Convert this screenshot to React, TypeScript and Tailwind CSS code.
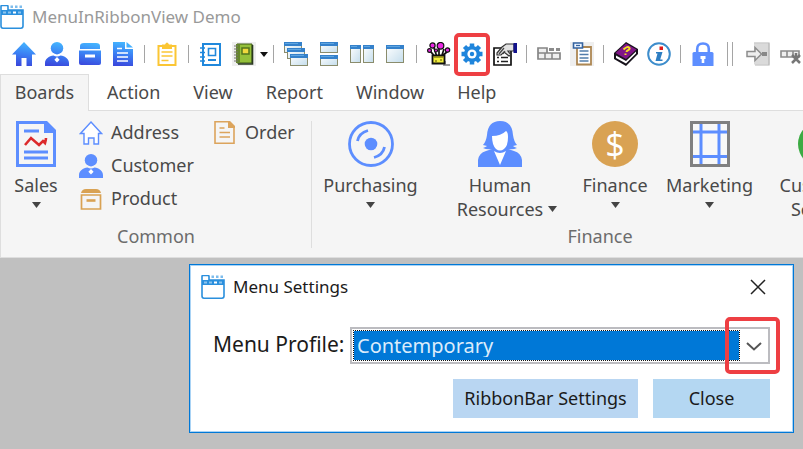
import React from "react";

type Kids = { children: React.ReactNode };

const Svg = ({ children, size = 24 }: Kids & { size?: number }) => (
  <svg width={size} height={size} viewBox="0 0 24 24" fill="none" className="shrink-0" aria-hidden="true">
    {children}
  </svg>
);

const BlueGradient = () => (
  <svg width="0" height="0" className="absolute" aria-hidden="true">
    <defs>
      <linearGradient id="blue" gradientUnits="userSpaceOnUse" x1="14" y1="0" x2="10" y2="24">
        <stop offset="0" stopColor="#45b8ff" />
        <stop offset="0.5" stopColor="#3b80f4" />
        <stop offset="1" stopColor="#3a48dc" />
      </linearGradient>
      <linearGradient id="pane" x1="0" y1="0" x2="1" y2="1">
        <stop offset="0" stopColor="#ffffff" />
        <stop offset="1" stopColor="#c4ddec" />
      </linearGradient>
    </defs>
  </svg>
);

const AppIcon = () => (
  <Svg>
    <path d="M1 5V1.500q0-1 1-1h5q1 0 1 1V5h15v16q0 2.200-2.200 2.200H3Q1 23.200 1 21z" fill="#fff" stroke="#2a8fdd" strokeWidth="1.600" />
    <path d="M1 5h22v5H1z" fill="#2a8fdd" />
    <path d="M3 6.500h3v2H3zM8 6.500h3v2H8zM18 6.500h3v2h-3z" fill="#8cc4ee" />
    <path d="M13 6.500h3v2h-3z" fill="#fff" />
    <path d="M10.500 0.500H13V3h-2.500zM15 0.500h2.500V3H15zM19.500 0.500H22V3h-2.500z" fill="#7dbcec" />
  </Svg>
);

const Home = () => (
  <Svg>
    <path d="M12 0 0 12.500h4V24h5.500v-8h5v8H20V12.500h4z" fill="url(#blue)" />
  </Svg>
);

const Person = ({ fill }: { fill: string }) => (
  <Svg>
    <circle cx="12" cy="6.200" r="6.200" fill={fill} />
    <path d="M0 24v-3C0 17 4 14 8.500 13.500q3.500 2 7 0C20 14 24 17 24 21v3z" fill={fill} />
    <path d="m12 15 2.600 2.800L12 20.500l-2.600-2.700z" fill="#fff" />
  </Svg>
);

const Drawer = () => (
  <Svg>
    <path d="M2 7V4q0-3 4-3h12q4 0 4 3v3z" fill="url(#blue)" />
    <path d="M1 8.500h22V21q0 2-2 2H3q-2 0-2-2z" fill="url(#blue)" />
    <path d="M7 12.500h10v3H7z" fill="#fff" />
  </Svg>
);

const Doc = () => (
  <Svg>
    <path d="M2 0h12v7h8v17H2z" fill="url(#blue)" />
    <path d="m15.500 0 6.500 5.500h-6.500z" fill="#45b0ff" />
    <path d="M6 6.500h5M6 11h11M6 15h11M6 19h11" stroke="#fff" strokeWidth="1.700" />
  </Svg>
);

const Clipboard = () => (
  <Svg>
    <path d="M3.500 4h17v19h-17z" fill="#fff" stroke="#fbc634" strokeWidth="2" />
    <path d="M7 2.500h3q2-4 4 0h3V7H7z" fill="#fbc634" />
    <path d="M6.500 10h11M6.500 14h11M6.500 18.500h7" stroke="#fbc634" strokeWidth="1.600" />
  </Svg>
);

const Notebook = () => (
  <Svg>
    <path d="M4 2h17v21H4z" fill="#fff" stroke="#2088dc" strokeWidth="2" />
    <path d="M1 6h5M1 10.500h5M1 15h5M1 19h5" stroke="#2088dc" strokeWidth="1.500" />
    <path d="M9.500 6.500h7v7h-7z" stroke="#2088dc" strokeWidth="1.600" />
    <path d="M9 18h8" stroke="#2088dc" strokeWidth="2" />
  </Svg>
);

const GreenBook = () => (
  <Svg>
    <path d="M0 0h24v24H0z" fill="#efefef" />
    <path d="M5 2h15v19H5z" fill="#94c03a" stroke="#3c5b14" strokeWidth="1" />
    <path d="M4 2h4v19H4z" fill="#66872b" />
    <path d="M2 4h4M2 7h4M2 10h4M2 13h4M2 16h4M2 19h4" stroke="#77776f" strokeWidth="1.200" />
    <path d="M10 6h7v6h-7z" fill="#efd83e" stroke="#53741c" strokeWidth="1.500" />
    <path d="M20.500 3v19H6" stroke="#2a3820" strokeWidth="1.600" />
  </Svg>
);

const Pane = ({ x, y, w, h }: { x: number; y: number; w: number; h: number }) => (
  <g>
    <rect x={x + 0.5} y={y + 0.5} width={w - 1} height={h - 1} fill="url(#pane)" stroke="#8a8c6c" />
    <rect x={x} y={y} width={w} height="4" fill="#3481cb" />
    <rect x={x + 1} y={y + 1} width={w - 5} height="1" fill="#5fa5e0" />
  </g>
);

const Cascade = () => (
  <Svg>
    <Pane x={0} y={0} w={18} h={11} />
    <Pane x={3} y={6} w={18} h={11} />
    <Pane x={6} y={12} w={18} h={12} />
  </Svg>
);
const TileRows = () => (
  <Svg>
    <Pane x={3} y={0} w={18} h={11} />
    <Pane x={3} y={13} w={18} h={11} />
  </Svg>
);
const TileCols = () => (
  <Svg>
    <Pane x={0} y={3} w={11} h={18} />
    <Pane x={13} y={3} w={11} h={18} />
  </Svg>
);
const OneWindow = () => (
  <Svg>
    <Pane x={3} y={3} w={18} h={18} />
  </Svg>
);

const Flowers = () => (
  <Svg>
    <path d="m8 15-4-5m6 5L7 6m5 9V6m2 9 7-6M3 9l3 3m9 1 2-6" stroke="#111" strokeWidth="1.700" />
    <path d="M16 24h7v-2h-4v-3h-2z" fill="#9b9b9b" />
    <path d="M5.500 13.500h12v8h-12z" fill="#f2ee3c" stroke="#111" strokeWidth="1.800" />
    <path d="M6.500 15h10M8 19h2m3-1h2" stroke="#8a8618" strokeWidth="1.500" />
    <g fill="#ea28e4" stroke="#111" strokeWidth="1.200">
      <circle cx="5.500" cy="3.500" r="2.600" />
      <circle cx="13.500" cy="3.800" r="3.300" />
      <circle cx="2.500" cy="8.500" r="1.900" />
      <circle cx="20.500" cy="8" r="2.200" />
      <circle cx="9" cy="8.500" r="1.500" />
    </g>
  </Svg>
);

const Gear = () => (
  <Svg>
    <g stroke="#1f85dc" strokeWidth="4.500">
      <path d="M12 1.500v21M1.500 12h21M4.500 4.500l15 15M19.500 4.500l-15 15" />
    </g>
    <circle cx="12" cy="12" r="8" fill="#1f85dc" />
    <circle cx="12" cy="12" r="4.600" fill="#fff" />
    <circle cx="12" cy="12" r="2.200" fill="#1f85dc" />
  </Svg>
);

const Properties = () => (
  <Svg>
    <path d="M1 6h17v17H1z" fill="#fff" stroke="#111" strokeWidth="1.700" />
    <path d="M4 15.500h2M8 15.500h7M4 19.500h2M8 19.500h7" stroke="#222" strokeWidth="1.400" />
    <path d="m4 11 5-6 4-3h8v7h-6l3 4-2 1-5-4-3 3H4z" fill="#e2e2e2" stroke="#333" strokeWidth="1.200" />
    <path d="m6 12 5-6m-1 6 2-3" stroke="#444" strokeWidth="1.200" />
    <path d="M20.500 1H24v10h-3.500z" fill="#12128c" />
  </Svg>
);

const RibbonGlyph = () => (
  <Svg>
    <path d="M1 6h9v5H1zM1 11h22v6H1z" fill="#efefef" stroke="#858585" strokeWidth="1.700" />
    <path d="M12 6h5v3h-5zM19 6h4v3h-4z" fill="#8b8b8b" />
    <path d="M8 11v6m7-6v6" stroke="#858585" strokeWidth="1.500" />
  </Svg>
);

const DocList = () => (
  <Svg>
    <path d="M0 0h24v24H0z" fill="#efefef" />
    <path d="M7 5h14v17.500H7z" fill="#fff" stroke="#ad8753" strokeWidth="1.800" />
    <path d="M9.500 9h9M9.500 12.500h9M9.500 16h9M9.500 19h9" stroke="#527dab" strokeWidth="1.400" />
    <path d="M3.500 1h9v5h-9z" fill="#eef5ff" stroke="#3463a0" strokeWidth="1.600" />
    <path d="M6 3.500h4" stroke="#3463a0" strokeWidth="1.300" />
  </Svg>
);

const HelpBook = () => (
  <Svg>
    <path d="M0 11 12 0l12 7v5L12 24 0 17z" fill="#17121b" />
    <path d="m2 13.500 10 5.500L22 9.500v2L12 21.500 2 16z" fill="#fff" />
    <path d="M1.500 11 12 1.500l10.500 6L12 17z" fill="#801687" />
    <path d="M9.500 7.500q4-4 6-1.500c1 2-3 2-3 4m-1 1.500v1.500" stroke="#f5df24" strokeWidth="2" />
  </Svg>
);

const Info = () => (
  <Svg>
    <circle cx="12" cy="12" r="10.800" fill="#fff" stroke="#3d8dcc" strokeWidth="2" />
    <path d="M12.500 4.500H16V8h-3.500z" fill="#e01b1b" />
    <path d="M9 10h6.500l-2.300 7.500h2.300v1.500H8.500L10.500 11.500H9z" fill="#2e7ec2" />
  </Svg>
);

const Lock = () => (
  <Svg>
    <path d="M6.200 11V7q0-5.500 5.800-5.500T17.800 7v4" stroke="#5d8eff" strokeWidth="2.600" />
    <path d="M3 10h18q1.500 0 1.500 1.500V24h-21V11.500Q1.500 10 3 10z" fill="#5d8eff" />
    <path d="M9.500 14h5v3h-1.200v4h-2.600v-4H9.500z" fill="#fff" />
  </Svg>
);

const Exit = () => (
  <Svg>
    <path d="M8 1.500h15.500v21H8z" fill="#dadada" />
    <path d="M8 1h15v22H9" stroke="#b5b5b5" strokeWidth="1.200" />
    <path d="M1 9.500h8V5.500l6.500 6.500L9 18.500v-4H1z" fill="#eee" stroke="#8d8d8d" strokeWidth="1.500" />
    <path d="M16 10h5v4h-5z" fill="#888" />
  </Svg>
);

const RibbonRemove = () => (
  <Svg>
    <path d="M2 9h18v6H2zM8 9v6M14 9v6" fill="#efefef" stroke="#8b8b8b" strokeWidth="1.600" />
    <path d="m13 13 8 8m0-8-8 8m4-10v5" stroke="#777" strokeWidth="2.500" />
  </Svg>
);

const Caret = () => (
  <svg width="9" height="6" viewBox="0 0 9 6" className="shrink-0" aria-hidden="true">
    <path d="M0 0h9L4.500 6z" fill="#444" />
  </svg>
);

const Tool = ({ label, children, marked = false }: Kids & { label: string; marked?: boolean }) => (
  <button type="button" aria-label={label} className="relative flex h-9 w-[33px] shrink-0 items-center justify-center">
    {children}
    {marked && <span className="absolute -top-[3px] -left-px h-[43px] w-9 rounded-[5px] border-4 border-[#ee3f43]" />}
  </button>
);

const Sep = () => (
  <span className="flex w-[11px] shrink-0 justify-center">
    <span className="h-[18px] w-px bg-[#a5a5a5]" />
  </span>
);

const SalesIcon = () => (
  <svg width="40" height="46" viewBox="0 0 40 46" fill="none" aria-hidden="true">
    <path d="M1.500 1.500h28l9 9v34h-37z" stroke="#5d8eff" strokeWidth="3" />
    <path d="M28 0h3l9 9v3H28z" fill="#5d8eff" />
    <path d="M8 10h15M8 31h24M8 37h24" stroke="#5d8eff" strokeWidth="3" />
    <path d="m9 24 6-7 8 7 4-4 2 2q1-3 1-5" stroke="#dc2a2c" strokeWidth="2.600" />
  </svg>
);

const DiscIcon = () => (
  <svg width="46" height="46" viewBox="0 0 46 46" fill="none" stroke="#5d8eff" aria-hidden="true">
    <circle cx="23" cy="23" r="21.500" strokeWidth="2.800" />
    <circle cx="23" cy="23" r="6.300" fill="#5d8eff" stroke="none" />
    <path d="M9.500 20Q11 12 20 9.500M36.500 26Q35 34 26 36.500" strokeWidth="2.800" />
  </svg>
);

const WomanIcon = () => (
  <svg width="44" height="46" viewBox="0 0 44 46" aria-hidden="true">
    <path
      d="M0 46V39q1-7 8-9l6-2q-5 1-9-1 3-1 4-2l-4-1q3-3 4-10Q10 0 22 0t13 14q1 7 4 10l-4 1q1 1 4 2-4 2-9 1l6 2q7 2 8 9v7z"
      fill="#5d8eff"
    />
    <path d="M14 15q9 0 14-5 2 1 2 6 0 9-4 12-4 3-8 0-4-4-4-13z" fill="#fff" />
    <path d="m16 30 6 14 6-14q-6 4-12 0z" fill="#fff" />
  </svg>
);

const CoinIcon = () => (
  <span className="flex size-[46px] items-center justify-center rounded-full bg-[#d9a253] font-['Open_Sans',sans-serif] text-[34px] leading-none font-medium text-white">
    $
  </span>
);

const GridIcon = () => (
  <svg width="40" height="46" viewBox="0 0 40 46" fill="none" aria-hidden="true">
    <path d="M1.500 1.500h37v43h-37z" fill="#f8f8f8" stroke="#808080" strokeWidth="3" />
    <path d="M11 3v40M29 3v40M3 11h34M3 35.500h34" stroke="#5d8eff" strokeWidth="3" />
  </svg>
);

const SupportIcon = () => <span className="size-[46px] rounded-full bg-[#3cab43]" />;

const SmallHouse = () => (
  <Svg>
    <path d="m12 1 10.500 11.500H19.500V23H15v-6H9.500v6H5V12.500H1.500z" fill="#fff" stroke="#5d8eff" strokeWidth="1.400" />
  </Svg>
);

const SmallBox = () => (
  <Svg>
    <path d="M2 6q1-4 5-4h10q4 0 5 4z" fill="#d9a253" />
    <path d="M2.500 8h19v14h-19z" stroke="#d9a253" strokeWidth="1.700" />
    <path d="M7.500 13.500h9" stroke="#d9a253" strokeWidth="2.600" />
  </Svg>
);

const SmallDoc = () => (
  <Svg>
    <path d="M2 0.800h14l5 5v16.400H2z" stroke="#dca45c" strokeWidth="1.600" />
    <path d="M15 0h2l5 5v2h-7z" fill="#dca45c" />
    <path d="M6.500 7h5M6.500 11.500H17M6.500 16H17" stroke="#dca45c" strokeWidth="1.600" />
  </Svg>
);

const BigButton = ({ icon, lines, width }: { icon: React.ReactNode; lines: string[]; width: string }) => (
  <button type="button" className={`flex shrink-0 flex-col items-center ${width}`}>
    {icon}
    <span className="mt-[6px] leading-6">{lines[0]}</span>
    {lines[1] ? (
      <span className="relative leading-6">
        {lines[1]}
        <span className="absolute top-[9px] left-full ml-[5px]">
          <Caret />
        </span>
      </span>
    ) : (
      <span className="mt-[5px]">
        <Caret />
      </span>
    )}
  </button>
);

const SmallButton = ({ icon, label }: { icon: React.ReactNode; label: string }) => (
  <button type="button" className="flex h-[33px] items-center gap-2">
    {icon}
    {label}
  </button>
);

const Group = ({ name, children }: Kids & { name: string }) => (
  <section aria-label={name} className="flex shrink-0 flex-col border-r border-[#dedede]">
    <div className="flex h-[104px] pr-[6px]">{children}</div>
    <h2 className="text-center leading-6 text-[#6c6c6c]">{name}</h2>
  </section>
);

const tabs = ["Action", "View", "Report", "Window", "Help"];

export default function App() {
  return (
    <div className="flex min-h-screen flex-col overflow-hidden bg-[#c0c0c0] font-['Noto_Sans','Open_Sans',sans-serif] text-[18px] text-[#494949]">
      <BlueGradient />
      <header className="bg-white">
        <div className="flex h-[34px] items-center gap-2">
          <AppIcon />
          <h1 className="text-[17px] leading-6 text-[#999]">MenuInRibbonView Demo</h1>
        </div>
        <div className="flex h-10 items-center overflow-visible pl-[7px]" role="toolbar" aria-label="Main toolbar">
          <Tool label="Address"><Home /></Tool>
          <Tool label="Customer"><Person fill="url(#blue)" /></Tool>
          <Tool label="Product"><Drawer /></Tool>
          <Tool label="Order"><Doc /></Tool>
          <Sep />
          <Tool label="Paste"><Clipboard /></Tool>
          <Sep />
          <Tool label="Contacts"><Notebook /></Tool>
          <Tool label="Ledger"><GreenBook /></Tool>
          <button type="button" aria-label="More ledgers" className="flex w-2 shrink-0 justify-center">
            <svg width="8" height="5" viewBox="0 0 8 5"><path d="M0 0h8L4 5z" fill="#111" /></svg>
          </button>
          <Sep />
          <Tool label="Cascade"><Cascade /></Tool>
          <Tool label="Tile horizontally"><TileRows /></Tool>
          <Tool label="Tile vertically"><TileCols /></Tool>
          <Tool label="Maximize"><OneWindow /></Tool>
          <Sep />
          <Tool label="Themes"><Flowers /></Tool>
          <Tool label="Menu settings" marked><Gear /></Tool>
          <Tool label="Properties"><Properties /></Tool>
          <Sep />
          <Tool label="Ribbon"><RibbonGlyph /></Tool>
          <Tool label="Report list"><DocList /></Tool>
          <Sep />
          <Tool label="Help"><HelpBook /></Tool>
          <Tool label="About"><Info /></Tool>
          <Sep />
          <Tool label="Lock"><Lock /></Tool>
          <span className="mx-2 h-6 w-[6px] shrink-0 border-x border-[#a5a5a5]" />
          <Tool label="Exit"><Exit /></Tool>
          <Tool label="Remove ribbon"><RibbonRemove /></Tool>
        </div>
        <nav className="flex h-[37px]">
          <button type="button" className="w-[89px] border border-b-0 border-[#dedede] bg-[#f5f5f5] pb-px">
            Boards
          </button>
          <div className="flex flex-1 gap-[33px] border-b border-[#dedede] pl-[18px]">
            {tabs.map((t) => (
              <button type="button" key={t}>{t}</button>
            ))}
          </div>
        </nav>
      </header>

      <div className="flex h-[147px] overflow-hidden border-b border-l border-[#dedede] bg-[#f5f5f5] pt-[10px] pb-[9px]">
        <Group name="Common">
          <BigButton icon={<SalesIcon />} lines={["Sales"]} width="w-[70px]" />
          <div className="-mt-[5px] ml-2 w-[134px]">
            <SmallButton icon={<SmallHouse />} label="Address" />
            <SmallButton icon={<Person fill="#5d8eff" />} label="Customer" />
            <SmallButton icon={<SmallBox />} label="Product" />
          </div>
          <div className="-mt-[5px] w-[92px]">
            <SmallButton icon={<SmallDoc />} label="Order" />
          </div>
        </Group>
        <Group name="Finance">
          <BigButton icon={<DiscIcon />} lines={["Purchasing"]} width="w-[117px]" />
          <BigButton icon={<WomanIcon />} lines={["Human", "Resources"]} width="w-[142px]" />
          <BigButton icon={<CoinIcon />} lines={["Finance"]} width="w-[88px]" />
          <BigButton icon={<GridIcon />} lines={["Marketing"]} width="w-[101px]" />
          <BigButton icon={<SupportIcon />} lines={["Customer", "Service"]} width="w-[122px]" />
        </Group>
      </div>

      <main className="flex justify-end py-[6px] pr-[9px]">
        <div role="dialog" aria-labelledby="dialog-title" className="w-[605px] border border-[#0078d7] bg-white pb-[14px] text-[#1b1b1b] shadow-[inset_0_0_0_1px_#a9d3f5]">
          <div className="flex h-11 items-center gap-2 pr-[27px] pl-[11px]">
            <AppIcon />
            <h2 id="dialog-title" className="flex-1 text-[17px] leading-6">Menu Settings</h2>
            <button type="button" aria-label="Close dialog">
              <svg width="16" height="16" viewBox="0 0 16 16"><path d="m1 1 14 14M15 1 1 15" stroke="#222" strokeWidth="1.500" /></svg>
            </button>
          </div>
          <div className="mt-[18px] flex items-center justify-between px-[23px]">
            <label htmlFor="profile" className="pb-[3px] text-[21px] leading-7">Menu Profile:</label>
            <div className="relative flex h-[37px] w-[420px] items-center border-2 border-[#bcbcc0] pl-px">
              <select id="profile" className="h-[31px] w-[387px] appearance-none border border-dotted border-[#111] bg-[#0078d7] bg-clip-padding pb-[3px] pl-[3px] text-[20px] text-[#dcecfb]">
                <option>Contemporary</option>
              </select>
              <svg width="28" height="14" viewBox="0 0 28 14" fill="none" className="pointer-events-none" aria-hidden="true">
                <path d="m7 4 7 6.500L21 4" stroke="#555" strokeWidth="2" />
              </svg>
              <span className="pointer-events-none absolute -top-3 -right-3 h-[57px] w-[55px] rounded-[5px] border-4 border-[#ee3f43]" />
            </div>
          </div>
          <div className="mt-[15px] flex justify-end gap-[15px] pr-[23px]">
            <button type="button" className="h-[39px] w-[185px] bg-[#b9d6f2]">RibbonBar Settings</button>
            <button type="button" className="h-[39px] w-[117px] bg-[#b4d7f2]">Close</button>
          </div>
        </div>
      </main>
    </div>
  );
}
